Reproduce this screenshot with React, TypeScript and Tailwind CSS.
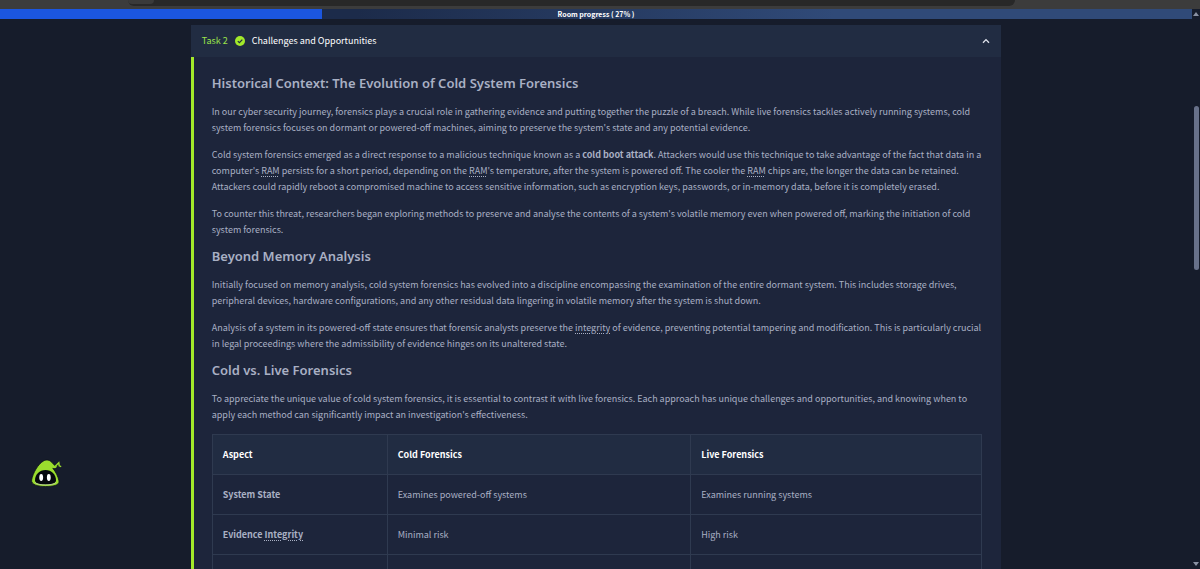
import { useState } from 'react';

const progress = 27;

const rows = [
  { aspect: <>System State</>, cold: 'Examines powered-off systems', live: 'Examines running systems' },
  { aspect: <>Evidence <Term title="Data is accurate and unaltered">Integrity</Term></>, cold: 'Minimal risk', live: 'High risk' },
  { aspect: <>Data Access</>, cold: 'Limited to stored data', live: 'Access to volatile data' },
];

function Term({ title, children }: { title: string; children: string }) {
  return (
    <abbr title={title} className="underline decoration-dotted underline-offset-2">
      {children}
    </abbr>
  );
}

function Heading({ children }: { children: string }) {
  return <h2 className="mb-[14px] font-['Noto_Sans'] text-[13px] leading-[14px] font-semibold text-[#a9b0c4]">{children}</h2>;
}

function Paragraph({ children }: { children: React.ReactNode }) {
  return <p className="mb-[11px] leading-4">{children}</p>;
}

function Mascot() {
  return (
    <svg viewBox="0 0 32 32" className="h-8 w-8">
      <path
        d="M1.6 23C3 16 8 7 13.500 4c3-1.700 6-1.300 8.500 1.500 1.500 2 2.500 3 4 3.500l1.800-1.600-1 3.400c-1.500 1-3 1-4 .4 3 3.800 5.200 8 6.200 12.800.6 4.500-6.500 5.500-13.500 5.500S1 28 1.600 23Z"
        fill="#9add2e"
        stroke="#0b121a"
        strokeWidth="0.8"
      />
      <path d="M5 23.500C5 17.500 9.500 13 15.500 13S26 17.500 26 23.500c0 3-5 4-10.500 4S5 26.500 5 23.500Z" fill="#05080d" />
      <path d="M5 25.500c2.500 3.200 18.500 3.200 21 0" fill="none" stroke="#b7c99a" strokeWidth="0.900" />
      <path d="M25 9.500 28.800 5.800l.4 3 2 .8" fill="none" stroke="#9add2e" strokeWidth="1.4" />
      <ellipse cx="11.200" cy="20.500" rx="1.900" ry="3.400" fill="#fff" />
      <ellipse cx="18.800" cy="20.500" rx="1.900" ry="3.400" fill="#fff" />
    </svg>
  );
}

export default function App() {
  const [open, setOpen] = useState(true);

  return (
    <div className="flex h-screen flex-col overflow-hidden bg-[#161c2b] font-['Noto_Sans_CJK_SC',sans-serif] text-[9px] text-[#a9b0c4]">
      {/* Browser edge */}
      <div className="h-[9px] shrink-0 bg-[#3c3c3c] pr-[185px] pl-32">
        <div className="h-[6px] rounded-b-md bg-[#282828]">
          <div className="h-1 w-[26px] rounded-b-md bg-[#3a3a3a]"></div>
        </div>
      </div>

      <div className="flex min-h-0 flex-1">
        <div className="min-w-0 flex-1 overflow-hidden">
          {/* Room progress */}
          <div className="relative h-[10px] bg-linear-to-r from-[#1c2b4a] from-30% to-[#304a78] to-70%">
            <div className="h-full bg-[#1b56e0]" style={{ width: `${progress}%` }}></div>
            <span className="absolute inset-0 text-center text-[7px] leading-[10px] font-bold text-white">
              Room progress ( {progress}% )
            </span>
          </div>

          {/* Task card */}
          <main className="mx-auto mt-[6px] w-[68%] bg-[#1d253b]">
            <button
              type="button"
              aria-expanded={open}
              onClick={() => setOpen(!open)}
              className="flex h-8 w-full items-center bg-[#212c42] px-[11px] text-left text-white"
            >
              <span className="text-[#9be44a]">Task 2</span>
              <svg viewBox="0 0 10 10" className="mx-[7px] h-[10px] w-[10px]">
                <circle cx="5" cy="5" r="5" fill="#a3ea2a" />
                <path d="M2.8 5.1 4.4 6.7 7.3 3.7" fill="none" stroke="#212c42" strokeWidth="1.2" />
              </svg>
              <span>Challenges and Opportunities</span>
              <svg viewBox="0 0 8 6" className="ml-auto h-[6px] w-2">
                <path d="M1 4.8 4 1.6 7 4.8" fill="none" stroke="#dfe3ec" strokeWidth="1.3" />
              </svg>
            </button>

            {open && (
              <div className="border-l-[3px] border-[#a3ea2a] pt-[19px] pr-[19px] pb-5 pl-[18px]">
                <Heading>Historical Context: The Evolution of Cold System Forensics</Heading>
                <Paragraph>
                  In our cyber security journey, forensics plays a crucial role in gathering evidence and putting together the puzzle of a breach. While live forensics tackles actively running systems, cold system forensics focuses on dormant or powered-off machines, aiming to preserve the system's state and any potential evidence.
                </Paragraph>
                <Paragraph>
                  Cold system forensics emerged as a direct response to a malicious technique known as a <strong>cold boot attack</strong>. Attackers would use this technique to take advantage of the fact that data in a computer's <Term title="Random Access Memory">RAM</Term> persists for a short period, depending on the <Term title="Random Access Memory">RAM</Term>'s temperature, after the system is powered off. The cooler the <Term title="Random Access Memory">RAM</Term> chips are, the longer the data can be retained. Attackers could rapidly reboot a compromised machine to access sensitive information, such as encryption keys, passwords, or in-memory data, before it is completely erased.
                </Paragraph>
                <Paragraph>
                  To counter this threat, researchers began exploring methods to preserve and analyse the contents of a system's volatile memory even when powered off, marking the initiation of cold system forensics.
                </Paragraph>

                <Heading>Beyond Memory Analysis</Heading>
                <Paragraph>
                  Initially focused on memory analysis, cold system forensics has evolved into a discipline encompassing the examination of the entire dormant system. This includes storage drives, peripheral devices, hardware configurations, and any other residual data lingering in volatile memory after the system is shut down.
                </Paragraph>
                <Paragraph>
                  Analysis of a system in its powered-off state ensures that forensic analysts preserve the <Term title="Data is accurate and unaltered">integrity</Term> of evidence, preventing potential tampering and modification. This is particularly crucial in legal proceedings where the admissibility of evidence hinges on its unaltered state.
                </Paragraph>

                <Heading>Cold vs. Live Forensics</Heading>
                <Paragraph>
                  To appreciate the unique value of cold system forensics, it is essential to contrast it with live forensics. Each approach has unique challenges and opportunities, and knowing when to apply each method can significantly impact an investigation's effectiveness.
                </Paragraph>

                <table className="w-full table-fixed border-collapse text-left">
                  <thead className="bg-[#212c42] text-white">
                    <tr className="h-10">
                      <th className="w-[175px] border border-[#2f3a50] px-[10px] font-bold">Aspect</th>
                      <th className="border border-[#2f3a50] px-[10px] font-bold">Cold Forensics</th>
                      <th className="w-[291px] border border-[#2f3a50] px-[10px] font-bold">Live Forensics</th>
                    </tr>
                  </thead>
                  <tbody>
                    {rows.map((row) => (
                      <tr key={row.cold} className="h-10">
                        <th className="border border-[#2f3a50] px-[10px] font-bold">{row.aspect}</th>
                        <td className="border border-[#2f3a50] px-[10px]">{row.cold}</td>
                        <td className="border border-[#2f3a50] px-[10px]">{row.live}</td>
                      </tr>
                    ))}
                  </tbody>
                </table>
              </div>
            )}
          </main>
        </div>

        {/* Scrollbar */}
        <div className="flex w-2 shrink-0 flex-col items-center justify-between py-[3px]">
          <svg viewBox="0 0 6 4" className="h-1 w-[6px]"><path d="M3 0 6 4H0Z" fill="#8a91a3" /></svg>
          <div className="mt-[90px] mb-auto h-[164px] w-[5px] rounded-full bg-[#68718a]"></div>
          <svg viewBox="0 0 6 4" className="h-1 w-[6px]"><path d="M3 4 6 0H0Z" fill="#8a91a3" /></svg>
        </div>
      </div>

      <button type="button" aria-label="Chat with Echo" className="fixed bottom-20 left-[30px]">
        <Mascot />
      </button>
    </div>
  );
}
